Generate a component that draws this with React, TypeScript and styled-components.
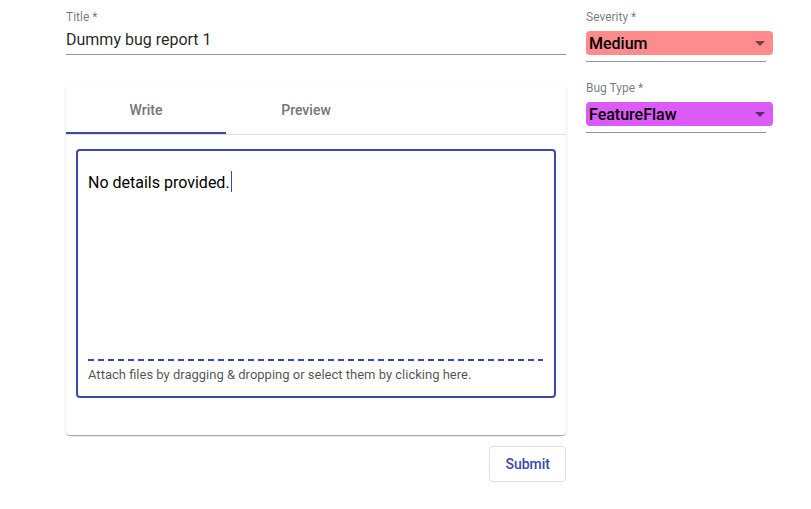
import React from "react";
import styled, { createGlobalStyle } from "styled-components";

const Global = createGlobalStyle`
  html, body { margin: 0; padding: 0; background: #fff; }
  body { font-family: Roboto, "Noto Sans", "Liberation Sans", sans-serif; color: rgba(0,0,0,0.87); }
  * { box-sizing: border-box; }
`;

const Page = styled.div`
  display: flex;
  align-items: flex-start;
  gap: 20px;
  padding: 10px 0 0 66px;
`;

const MainColumn = styled.div`
  width: 500px;
  display: flex;
  flex-direction: column;
`;

const SideColumn = styled.div`
  width: 190px;
  display: flex;
  flex-direction: column;
  gap: 19px;
`;

const FieldLabel = styled.label`
  display: block;
  font-size: 12px;
  line-height: 14px;
  color: rgba(0, 0, 0, 0.54);
`;

const TextInput = styled.div`
  font-size: 16px;
  line-height: 19px;
  padding: 6px 0 5px;
  border-bottom: 1px solid rgba(0, 0, 0, 0.42);
  color: rgba(0, 0, 0, 0.87);
`;

const Card = styled.div`
  margin-top: 31px;
  background: #fff;
  border-radius: 4px;
  box-shadow: 0px 2px 1px -1px rgba(0,0,0,0.2), 0px 1px 1px 0px rgba(0,0,0,0.14), 0px 1px 3px 0px rgba(0,0,0,0.12);
`;

const TabBar = styled.div`
  display: flex;
  height: 49px;
  border-bottom: 1px solid #e0e0e0;
`;

const Tab = styled.div<{ $active?: boolean }>`
  position: relative;
  width: 160px;
  height: 48px;
  display: flex;
  align-items: center;
  justify-content: center;
  font-size: 14px;
  font-weight: 500;
  color: #757575;
  &::after {
    content: "";
    position: absolute;
    left: 0;
    right: 0;
    bottom: 0;
    height: 2px;
    background: ${(p) => (p.$active ? "#3949ab" : "transparent")};
  }
`;

const CardBody = styled.div`
  padding: 14px 10px 37px;
`;

const Editor = styled.div`
  height: 249px;
  border: 2px solid #3949ab;
  border-radius: 4px;
  display: flex;
  flex-direction: column;
  padding: 0 10px;
`;

const EditorText = styled.div`
  flex: 1;
  padding-top: 22px;
  font-size: 16px;
  line-height: 19px;
  color: #000;
  display: flex;
  align-items: flex-start;
`;

const Caret = styled.span`
  display: inline-block;
  width: 1px;
  height: 21px;
  margin-top: -2px;
  margin-left: 1px;
  background: #3949ab;
`;

const DashedRule = styled.div`
  height: 2px;
  margin-right: 1px;
  background: repeating-linear-gradient(to right, #3949ab 0 6px, transparent 6px 10px);
`;

const AttachHint = styled.div`
  font-size: 13px;
  line-height: 15px;
  color: rgba(0, 0, 0, 0.7);
  padding: 6px 0 14px;
`;

const Actions = styled.div`
  display: flex;
  justify-content: flex-end;
  margin-top: 11px;
`;

const Button = styled.button`
  font-family: inherit;
  font-size: 14px;
  font-weight: 500;
  line-height: 20px;
  color: #3949ab;
  background: #fff;
  border: 1px solid #e0e0e0;
  border-radius: 4px;
  padding: 7px 15px;
`;

const SelectField = styled.div`
  display: flex;
  flex-direction: column;
`;

const SelectBox = styled.div<{ $bg: string }>`
  margin-top: 7px;
  width: 187px;
  height: 24px;
  border-radius: 4px;
  background: ${(p) => p.$bg};
  display: flex;
  align-items: center;
  justify-content: space-between;
  padding: 0 8px 0 3px;
  font-size: 16px;
  font-weight: 500;
  color: #000;
`;

const Arrow = styled.span`
  width: 0;
  height: 0;
  border-left: 5px solid transparent;
  border-right: 5px solid transparent;
  border-top: 5px solid rgba(0, 0, 0, 0.54);
`;

const SelectUnderline = styled.div`
  margin-top: 6px;
  width: 180px;
  height: 1px;
  background: rgba(0, 0, 0, 0.42);
`;

function Select({ label, value, color }: { label: string; value: string; color: string }) {
  return (
    <SelectField>
      <FieldLabel>{label}</FieldLabel>
      <SelectBox $bg={color}>
        <span>{value}</span>
        <Arrow />
      </SelectBox>
      <SelectUnderline />
    </SelectField>
  );
}

export default function App() {
  return (
    <>
      <Global />
      <Page>
        <MainColumn>
          <FieldLabel>Title *</FieldLabel>
          <TextInput>Dummy bug report 1</TextInput>
          <Card>
            <TabBar>
              <Tab $active>Write</Tab>
              <Tab>Preview</Tab>
            </TabBar>
            <CardBody>
              <Editor>
                <EditorText>
                  No details provided.
                  <Caret />
                </EditorText>
                <DashedRule />
                <AttachHint>Attach files by dragging &amp; dropping or select them by clicking here.</AttachHint>
              </Editor>
            </CardBody>
          </Card>
          <Actions>
            <Button>Submit</Button>
          </Actions>
        </MainColumn>
        <SideColumn>
          <Select label="Severity *" value="Medium" color="#ff8c8c" />
          <Select label="Bug Type *" value="FeatureFlaw" color="#dc5af6" />
        </SideColumn>
      </Page>
    </>
  );
}
